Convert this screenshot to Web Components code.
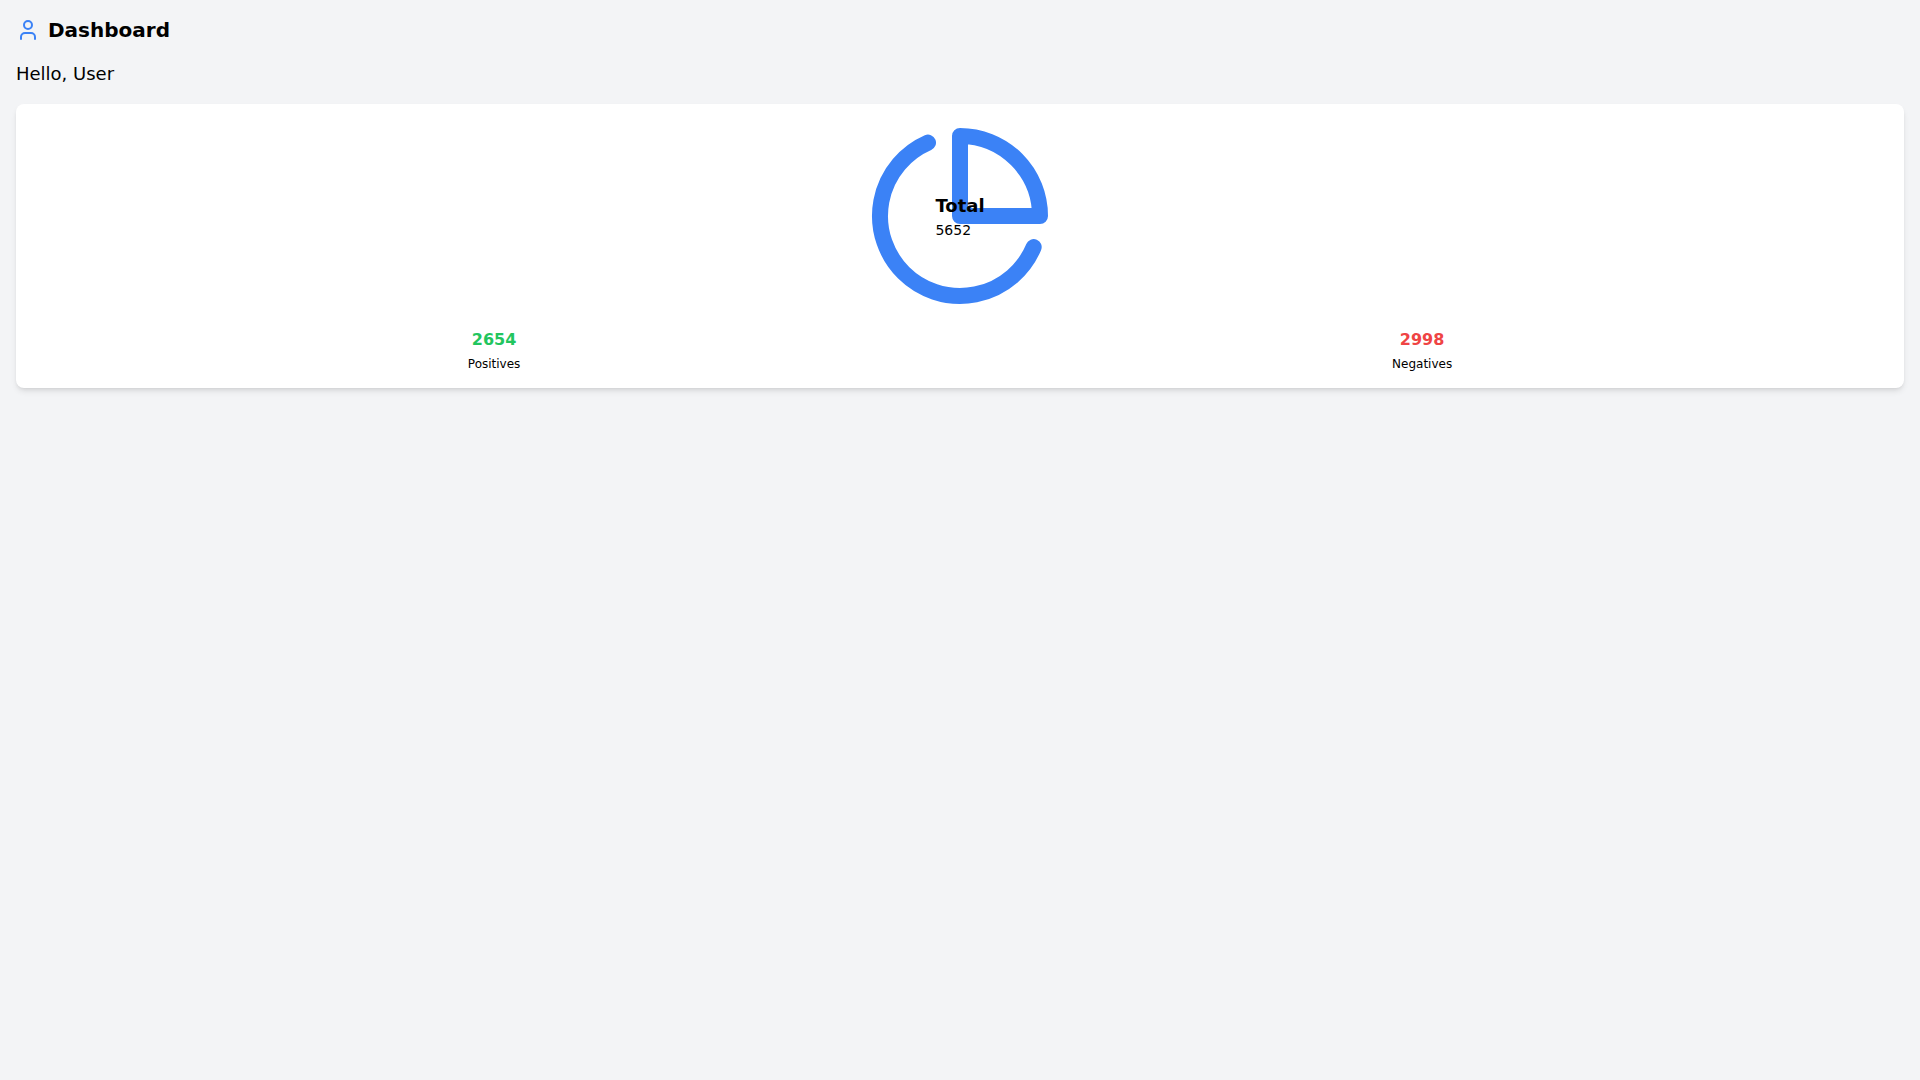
<!DOCTYPE html>
<html>
<head>
<meta charset="utf-8">
<title>Dashboard</title>
<style>
    html, body { margin: 0; background: #f3f4f6; }
    body { font-family: "DejaVu Sans", sans-serif; color: #000; min-height: 100vh; }
</style>
</head>
<body>
<dash-board>
    <dash-header slot="header">Dashboard</dash-header>
    <span slot="greeting">Hello, User</span>
    <total-card total="5652">
        <stat-item slot="stats" value="2654" tone="positive">Positives</stat-item>
        <stat-item slot="stats" value="2998" tone="negative">Negatives</stat-item>
    </total-card>
</dash-board>

<script>
// page wrapper: header, greeting line, then the card
class DashBoard extends HTMLElement {
    constructor () {
        super ();
        const shadow_dom = this.attachShadow ({ mode: "open" });
        shadow_dom.innerHTML = `
        <style>
        :host { display: block; padding: 16px; }
        .greeting { font-size: 18px; line-height: 28px; margin: 16px 0; }
        </style>
        <slot name="header"></slot>
        <div class="greeting"><slot name="greeting"></slot></div>
        <slot></slot>
        `;
    }
}

class DashHeader extends HTMLElement {
    constructor () {
        super ();
        const shadow_dom = this.attachShadow ({ mode: "open" });
        shadow_dom.innerHTML = `
        <style>
        :host { display: flex; align-items: center; gap: 8px; height: 28px; font-size: 20px; font-weight: 700; }
        svg { width: 24px; height: 24px; fill: none; stroke: #3b82f6; stroke-width: 2; stroke-linecap: round; stroke-linejoin: round; }
        </style>
        <svg viewBox="0 0 24 24">
            <path d="M19 21v-2a4 4 0 0 0-4-4H9a4 4 0 0 0-4 4v2"></path>
            <circle cx="12" cy="7" r="4"></circle>
        </svg>
        <slot></slot>
        `;
    }
}

// white card with the pie icon, the total over it, and the two counts below
class TotalCard extends HTMLElement {
    constructor () {
        super ();
        const shadow_dom = this.attachShadow ({ mode: "open" });
        shadow_dom.innerHTML = `
        <style>
        :host { display: block; background: #fff; border-radius: 8px; padding: 16px; box-shadow: 0 4px 6px -1px rgba(0,0,0,.1), 0 2px 4px -2px rgba(0,0,0,.1); }
        .chart { position: relative; width: 192px; height: 192px; margin: 0 auto; }
        svg { display: block; width: 192px; height: 192px; fill: none; stroke: #3b82f6; stroke-width: 2; stroke-linecap: round; stroke-linejoin: round; }
        .label { position: absolute; top: 0; left: 0; right: 0; bottom: 0; display: flex; align-items: center; justify-content: center; }
        .title { font-size: 18px; line-height: 28px; font-weight: 700; }
        .total { font-size: 14px; line-height: 20px; }
        .stats { display: flex; justify-content: space-around; margin-top: 16px; }
        </style>
        <div class="chart">
            <svg viewBox="0 0 24 24">
                <path d="M21.21 15.89A10 10 0 1 1 8 2.83"></path>
                <path d="M22 12A10 10 0 0 0 12 2v10z"></path>
            </svg>
            <div class="label">
                <div>
                    <div class="title">Total</div>
                    <div class="total"></div>
                </div>
            </div>
        </div>
        <div class="stats"><slot name="stats"></slot></div>
        `;
    }

    connectedCallback () {
        this.shadowRoot.querySelector (".total").textContent = this.getAttribute ("total");
    }
}

class StatItem extends HTMLElement {
    constructor () {
        super ();
        const shadow_dom = this.attachShadow ({ mode: "open" });
        shadow_dom.innerHTML = `
        <style>
        :host { display: block; text-align: center; }
        .value { font-size: 16px; line-height: 24px; font-weight: 700; margin-bottom: 4px; }
        :host([tone="positive"]) .value { color: #22c55e; }
        :host([tone="negative"]) .value { color: #ef4444; }
        .name { font-size: 12px; line-height: 16px; }
        </style>
        <div class="value"></div>
        <div class="name"><slot></slot></div>
        `;
    }

    connectedCallback () {
        this.shadowRoot.querySelector (".value").textContent = this.getAttribute ("value");
    }
}

customElements.define ("dash-board", DashBoard);
customElements.define ("dash-header", DashHeader);
customElements.define ("total-card", TotalCard);
customElements.define ("stat-item", StatItem);
</script>
</body>
</html>
